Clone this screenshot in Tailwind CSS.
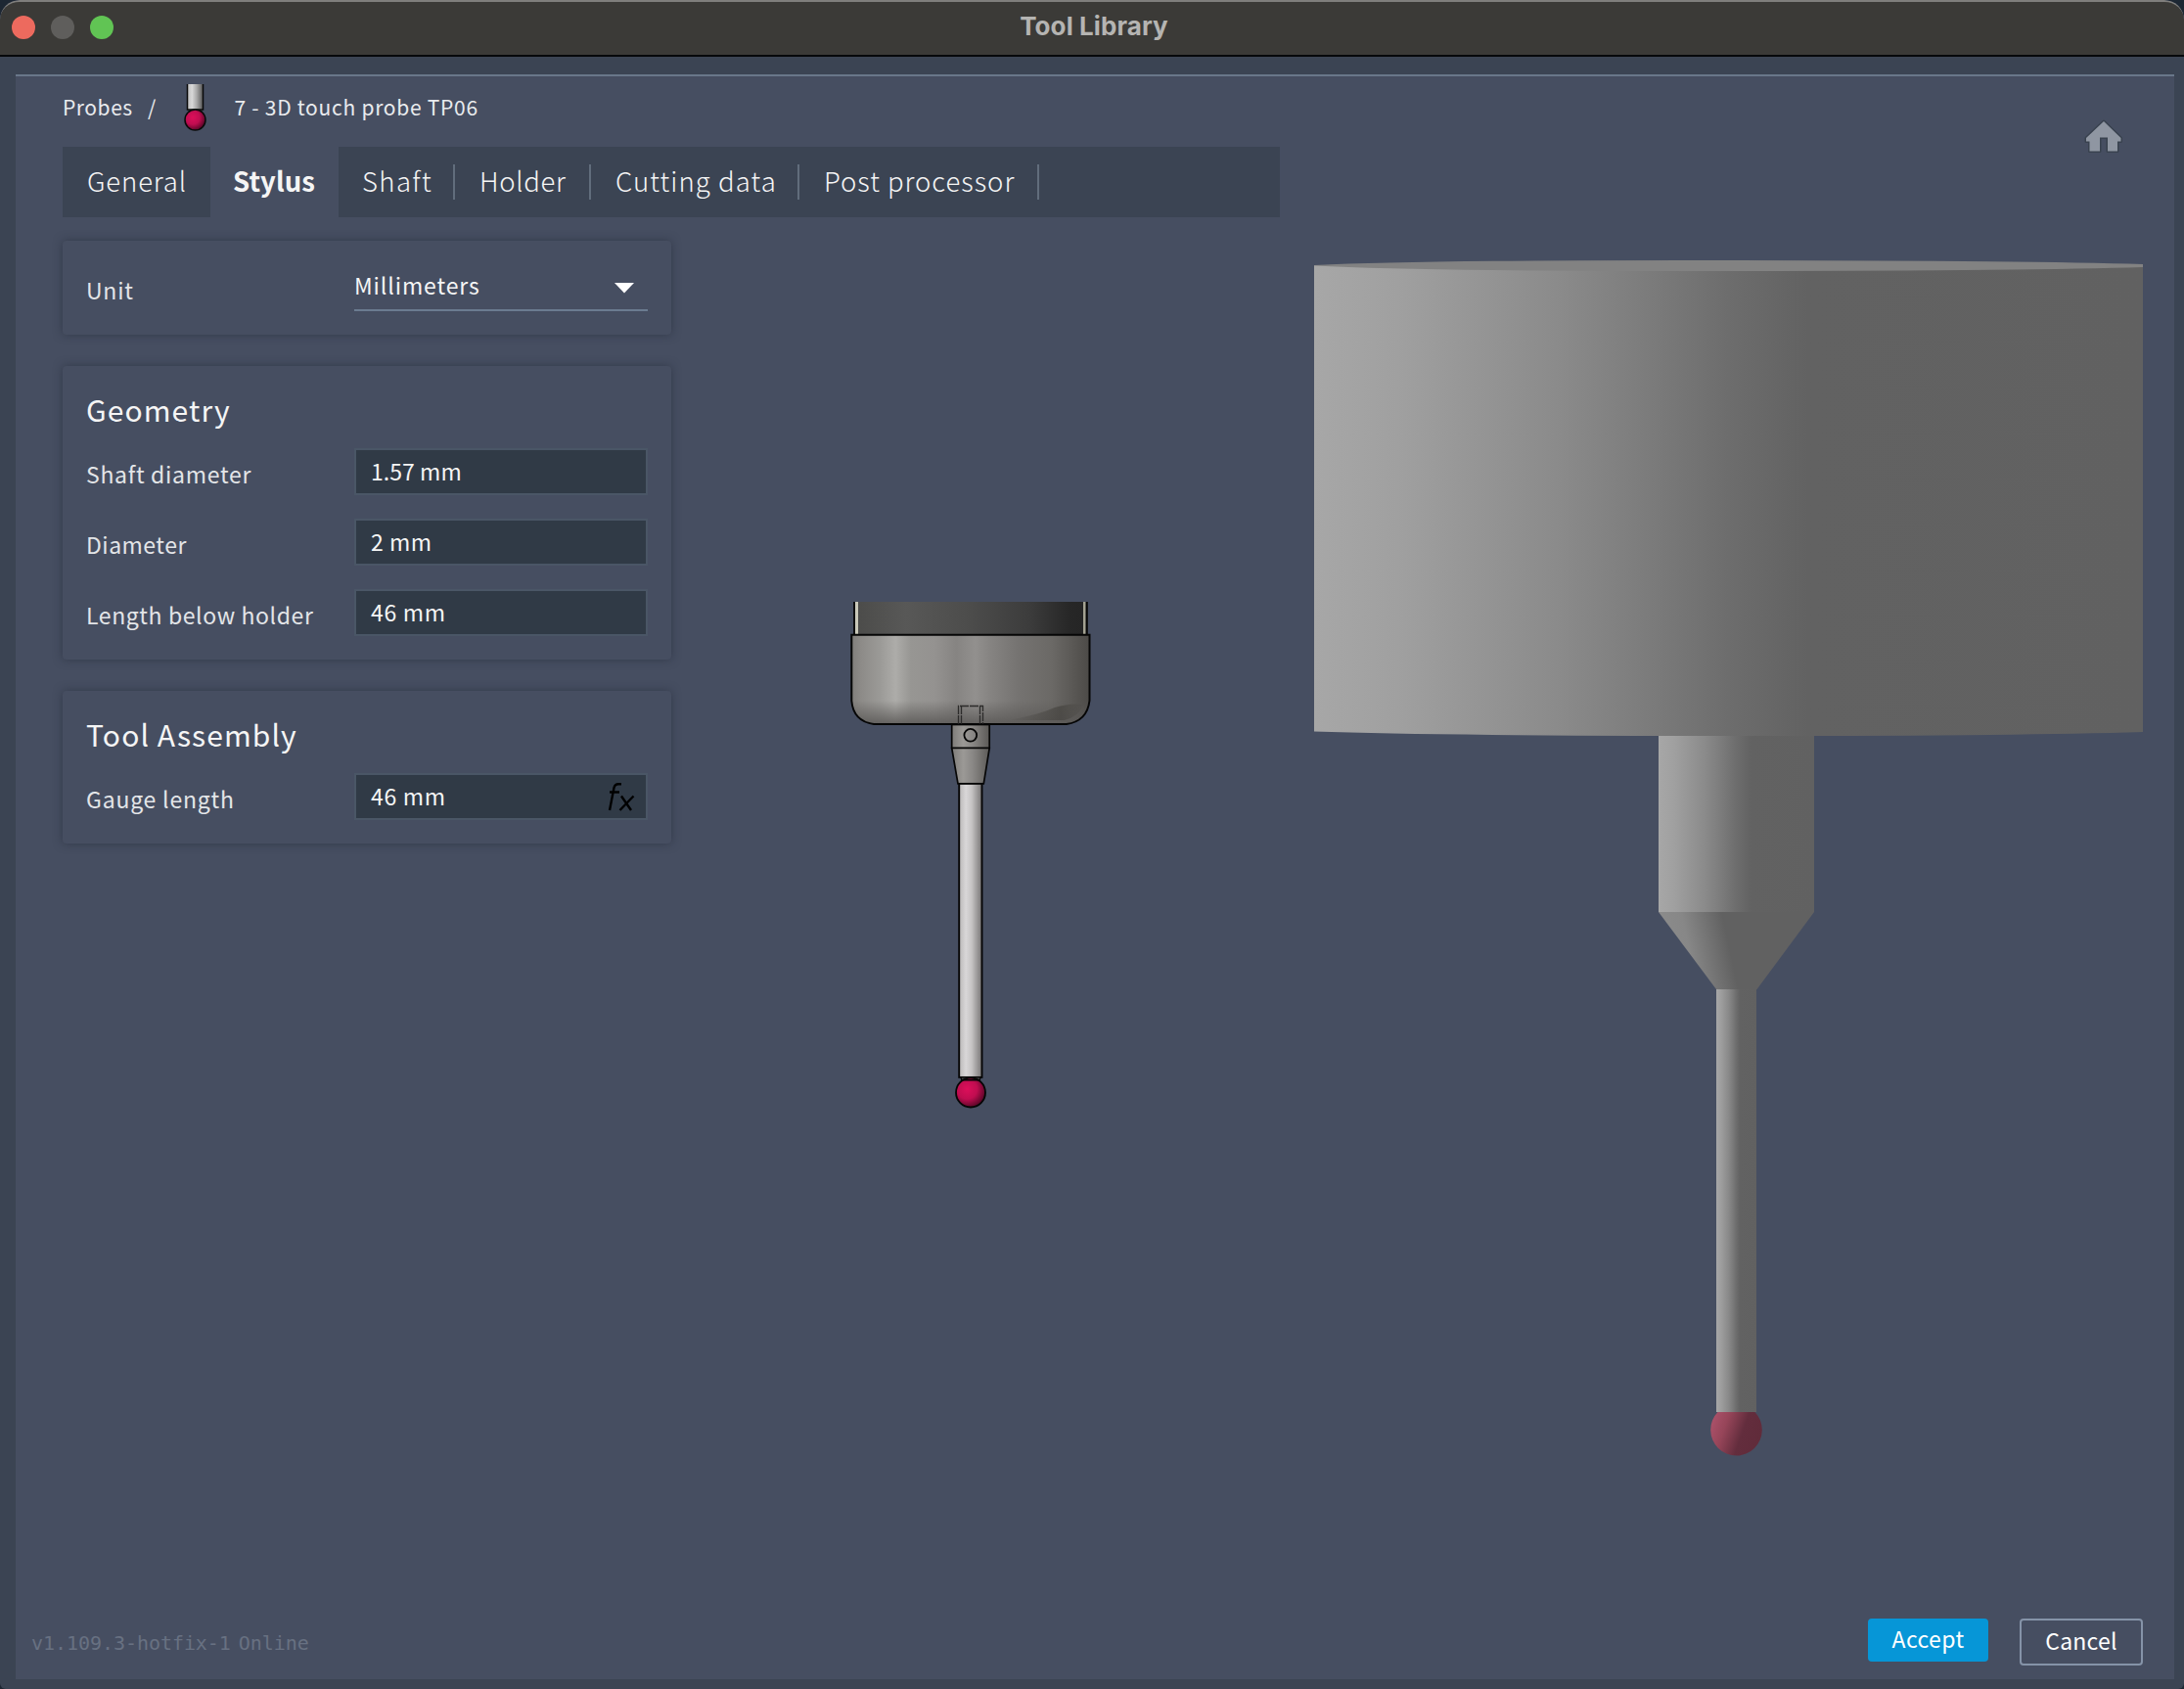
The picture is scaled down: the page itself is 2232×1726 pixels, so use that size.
<!DOCTYPE html>
<html lang="en">
<head>
<meta charset="utf-8">
<title>Tool Library</title>
<script src="https://cdn.jsdelivr.net/npm/@tailwindcss/browser@4"></script>
</head>
<body class="bg-[#1d2733]">
<div class="flex h-[1726px] w-[2232px] flex-col overflow-hidden rounded-tl-[20px] rounded-tr-[20px] rounded-b-[6px] bg-[#3b4453] font-['Noto_Sans_CJK_SC','Noto_Sans',sans-serif] text-[23px] text-[#f5f5f5]">

  <!-- Window title bar -->
  <header class="grid h-[58px] shrink-0 grid-cols-3 items-center rounded-t-[20px] border-t-2 border-b-2 border-t-[#7f7e7c] border-b-[#06080a] bg-[#3b3a37] px-3 pb-0.5">
    <div class="flex gap-4">
      <span class="size-6 rounded-full bg-[#ed6a5e]"></span>
      <span class="size-6 rounded-full bg-[#5f5e5c]"></span>
      <span class="size-6 rounded-full bg-[#61c454]"></span>
    </div>
    <h1 class="pb-[3px] pl-1 text-center font-['Inter',sans-serif] text-[26px] leading-none font-bold tracking-[0.100px] text-[#b5b4b2]">Tool Library</h1>
  </header>

  <main class="mt-[18px] mr-[10px] mb-[10px] ml-4 flex grow flex-col border-t-2 border-[#69778a] bg-[#464e61]">
    <div class="flex h-[1576px]">
      <section class="flex w-[1292px] shrink-0 flex-col pl-12">

        <nav class="mb-3 flex h-[60px] items-center pt-px text-[21px] leading-[30px] text-[#e9ebee]">
          <span class="w-[87px] tracking-[0.56px]">Probes</span>
          <span class="w-[35px]">/</span>
          <svg class="mt-[3px] h-12 w-[27px] shrink-0" viewBox="186 86 27 48">
            <defs>
              <linearGradient id="miniShaft"><stop offset="0" stop-color="#bdbdbd"/><stop offset=".3" stop-color="#d8d8d8"/><stop offset=".6" stop-color="#a8a8a8"/><stop offset="1" stop-color="#555"/></linearGradient>
              <radialGradient id="ruby" cx=".38" cy=".38" r=".68"><stop offset="0" stop-color="#dc0f5a"/><stop offset=".5" stop-color="#c00d50"/><stop offset="1" stop-color="#4c0522"/></radialGradient>
            </defs>
            <rect x="191.500" y="86" width="16" height="26" fill="url(#miniShaft)"/>
            <path d="M191.500 86V112H207.500V86" fill="none" stroke="#0a0a0a" stroke-width="1.500"/>
            <rect x="192.500" y="112" width="14" height="3" fill="#222"/>
            <circle cx="199.500" cy="122.500" r="10.500" fill="url(#ruby)" stroke="#0a0a0a" stroke-width="1.500"/>
          </svg>
          <span class="ml-[26.500px] tracking-[0.73px]">7 - 3D touch probe TP06</span>
        </nav>

        <div class="flex h-[72px] w-[1244px] bg-[#3b4453] text-[27.500px] leading-[68px] font-light whitespace-nowrap">
          <div class="w-[151px] pl-[25px] tracking-[0.850px]">General</div>
          <div class="w-[131px] bg-[#464e61] pl-[23px] font-bold tracking-[0.100px]">Stylus</div>
          <div class="flex w-[119px] items-center justify-between pl-6 tracking-[1.400px]"><span class="h-[72px]">Shaft</span><i class="h-9 w-0.5 bg-[#616d7c]"></i></div>
          <div class="flex w-[139px] items-center justify-between pl-[25px] tracking-[0.700px]"><span class="h-[72px]">Holder</span><i class="h-9 w-0.5 bg-[#616d7c]"></i></div>
          <div class="flex w-[213px] items-center justify-between pl-[25px] tracking-[1.100px]"><span class="h-[72px]">Cutting data</span><i class="h-9 w-0.5 bg-[#616d7c]"></i></div>
          <div class="flex w-[245px] items-center justify-between pl-[25px] tracking-[0.980px]"><span class="h-[72px]">Post processor</span><i class="h-9 w-0.5 bg-[#616d7c]"></i></div>
        </div>

        <div class="mt-6 flex">
          <div class="flex w-[622px] shrink-0 flex-col gap-8">
            <div class="flex h-24 rounded px-6 pt-5 shadow-[0_0_10px_rgba(30,38,52,0.5)]">
              <label class="w-[274px] pt-0.5 leading-[56px] tracking-[0.780px] text-[#e3e5e8]">Unit</label>
              <div class="flex h-[52px] w-[300px] items-center justify-between border-b-2 border-[#6b7b90] pr-[14px]">
                <span class="pt-px tracking-[0.900px]">Millimeters</span>
                <svg class="mt-1.5 h-[11px] w-5" viewBox="0 0 20 11"><path d="M0 0H20L10 10.500Z" fill="#fff"/></svg>
              </div>
            </div>

            <div class="rounded px-6 py-6 shadow-[0_0_10px_rgba(30,38,52,0.5)]">
              <h2 class="mb-5 text-[30px] leading-10 tracking-[1.090px]">Geometry</h2>
              <div class="flex flex-col gap-6">
                <div class="flex h-12"><label class="w-[274px] leading-[52px] tracking-[0.700px] text-[#e3e5e8]">Shaft diameter</label><div class="w-[300px] border-2 border-[#4a5666] bg-[#303a46] pl-[15px] leading-[42px] tracking-[0.050px]">1.57 mm</div></div>
                <div class="flex h-12"><label class="w-[274px] leading-[52px] tracking-[0.490px] text-[#e3e5e8]">Diameter</label><div class="w-[300px] border-2 border-[#4a5666] bg-[#303a46] pl-[15px] leading-[42px] tracking-[0.500px]">2 mm</div></div>
                <div class="flex h-12"><label class="w-[274px] leading-[52px] tracking-[0.600px] text-[#e3e5e8]">Length below holder</label><div class="w-[300px] border-2 border-[#4a5666] bg-[#303a46] pl-[15px] leading-[42px] tracking-[0.720px]">46 mm</div></div>
              </div>
            </div>

            <div class="rounded px-6 py-6 shadow-[0_0_10px_rgba(30,38,52,0.5)]">
              <h2 class="mb-5 text-[30px] leading-10 tracking-[1.100px]">Tool Assembly</h2>
              <div class="flex h-12">
                <label class="w-[274px] leading-[52px] tracking-[0.800px] text-[#e3e5e8]">Gauge length</label>
                <div class="flex w-[300px] justify-between border-2 border-[#4a5666] bg-[#303a46] pr-[11px] pl-[15px] leading-[42px] tracking-[0.720px]">
                  <span>46 mm</span>
                  <svg class="mt-1.5 h-[32px] w-[28px]" viewBox="622 798 28 32" fill="none" stroke="#000" stroke-width="2.400"><path d="M624 828L628.500 805Q629.300 801.300 633 801.300H636M624 809.500H634M636 813.500L646 828M648.500 813.500L634.500 828"/></svg>
                </div>
              </div>
            </div>
          </div>

          <!-- Schematic of the probe -->
          <svg class="h-[940px] w-[622px]" viewBox="686 246 622 940">
            <defs>
              <linearGradient id="collar"><stop offset="0" stop-color="#4b4b49"/><stop offset=".22" stop-color="#585857"/><stop offset=".5" stop-color="#4c4c4b"/><stop offset=".75" stop-color="#3c3c3c"/><stop offset=".92" stop-color="#272727"/><stop offset="1" stop-color="#242424"/></linearGradient>
              <linearGradient id="body"><stop offset="0" stop-color="#807e7b"/><stop offset=".04" stop-color="#8d8b88"/><stop offset=".12" stop-color="#9b9a97"/><stop offset=".185" stop-color="#adaca9"/><stop offset=".25" stop-color="#979693"/><stop offset=".35" stop-color="#949290"/><stop offset=".44" stop-color="#868482"/><stop offset=".52" stop-color="#92908e"/><stop offset=".58" stop-color="#868482"/><stop offset=".7" stop-color="#757371"/><stop offset=".84" stop-color="#6b6966"/><stop offset=".93" stop-color="#5a5855"/><stop offset="1" stop-color="#4c4a47"/></linearGradient>
              <linearGradient id="under" x2="0" y2="1"><stop offset="0" stop-color="#5b5957" stop-opacity="0"/><stop offset="1" stop-color="#5b5957" stop-opacity=".85"/></linearGradient>
              <linearGradient id="shade"><stop offset="0" stop-color="#45433f" stop-opacity="0"/><stop offset=".7" stop-color="#45433f" stop-opacity=".7"/><stop offset="1" stop-color="#45433f" stop-opacity=".1"/></linearGradient>
              <linearGradient id="neck"><stop offset="0" stop-color="#7d7b78"/><stop offset=".3" stop-color="#9b9996"/><stop offset=".55" stop-color="#8a8886"/><stop offset="1" stop-color="#5b5956"/></linearGradient>
              <linearGradient id="stem"><stop offset="0" stop-color="#b9b7b7"/><stop offset=".3" stop-color="#d9d7d8"/><stop offset=".55" stop-color="#c6c4c4"/><stop offset="1" stop-color="#777575"/></linearGradient>
            </defs>
            <rect x="873" y="615" width="238.500" height="33" fill="url(#collar)"/>
            <rect x="874" y="615" width="3" height="33" fill="#c9c8b9"/>
            <rect x="1107" y="615" width="2.500" height="33" fill="#a3a292"/>
            <path d="M873 615V648M1110.800 615V648" stroke="#080808" stroke-width="1.800"/>
            <path d="M870.300 648.700H1113.500V716Q1111 737 1090 740H893Q872 737 870.300 716Z" fill="url(#body)"/>
            <path d="M871 716H1112.500Q1110 737 1090 739H893Q873 737 871 716Z" fill="url(#under)"/>
            <path d="M1030 736Q1060 731 1078 723Q1094 718 1107 720Q1103 732 1088 736Z" fill="url(#shade)"/>
            <path d="M870.300 648.700H1113.500V716Q1111 737 1090 740H893Q872 737 870.300 716Z" fill="none" stroke="#060606" stroke-width="2"/>
            <path d="M979.500 740V721.500H1004.500V740M982.500 740V722M1001.500 740V722" fill="none" stroke="#2c2b2a" stroke-width="1.300" stroke-dasharray="9 1"/>
            <rect x="972.700" y="740.500" width="38.500" height="24" fill="url(#neck)" stroke="#060606" stroke-width="1.700"/>
            <circle cx="991.800" cy="751.300" r="6.400" fill="none" stroke="#060606" stroke-width="1.800"/>
            <path d="M972.700 764.500H1011.200L1005.300 800.900H979Z" fill="url(#neck)" stroke="#060606" stroke-width="1.700"/>
            <rect x="980.200" y="800.900" width="23.300" height="300" fill="url(#stem)" stroke="#060606" stroke-width="1.900"/>
            <path d="M982 1101H1002L1001 1105H983Z" fill="#4b4b4b" stroke="#060606" stroke-width="1.200"/>
            <circle cx="992" cy="1116.500" r="15" fill="url(#ruby)" stroke="#060606" stroke-width="1.800"/>
            <path d="M984 1103.800H1000" stroke="#060606" stroke-width="1.500"/>
          </svg>
        </div>
      </section>

      <!-- 3D viewport -->
      <svg class="h-[1500px] w-[914px] shrink-0" viewBox="1308 78 914 1500">
        <defs>
          <linearGradient id="cyl"><stop offset="0" stop-color="#a7a7a7"/><stop offset=".1" stop-color="#a0a0a0"/><stop offset=".2" stop-color="#959595"/><stop offset=".3" stop-color="#8a8a8a"/><stop offset=".4" stop-color="#7c7c7c"/><stop offset=".5" stop-color="#6d6d6d"/><stop offset=".595" stop-color="#626262"/><stop offset="1" stop-color="#616161"/></linearGradient>
          <linearGradient id="cone" gradientUnits="userSpaceOnUse" x1="1705" y1="975" x2="1766" y2="962"><stop offset="0" stop-color="#8b8b8b"/><stop offset=".35" stop-color="#878787"/><stop offset=".75" stop-color="#707070"/><stop offset="1" stop-color="#616161"/></linearGradient>
          <linearGradient id="tip" x1="0" y1=".35" x2="1" y2=".65"><stop offset="0" stop-color="#a95068"/><stop offset=".25" stop-color="#964559"/><stop offset=".6" stop-color="#632d3d"/><stop offset="1" stop-color="#602b3a"/></linearGradient>
        </defs>
        <path d="M2150 124L2167.500 141V144.500H2164V154.500H2154V140.500H2146V154.500H2135.500V144.500H2132V141Z" fill="#8f96a2" stroke="#39424f" stroke-width="3" stroke-linejoin="round" paint-order="stroke"/>
        <path d="M1343 271Q1450 266 1720 266Q2060 266 2190 270V300H1343Z" fill="#828282"/>
        <path d="M1343 271.500Q1450 277 1720 277Q2060 277 2190 273V748Q2060 752 1790 752Q1480 752 1343 747.500Z" fill="url(#cyl)"/>
        <rect x="1695" y="752" width="159" height="180" fill="url(#cyl)"/>
        <path d="M1695 932H1854L1795.500 1011H1754Z" fill="url(#cone)"/>
        <path d="M1755.500 1443H1793.500A26.300 26.300 0 1 1 1755.500 1443Z" fill="url(#tip)"/>
        <rect x="1754" y="1011" width="41" height="432" fill="url(#cyl)"/>
      </svg>
    </div>

    <footer class="flex items-start justify-between pr-8 pl-4">
      <p class="flex gap-2 font-['DejaVu_Sans_Mono',monospace] text-[20px] leading-[50px] tracking-[-0.050px] text-[#687182]"><span>v1.109.3-hotfix-1</span><span>Online</span></p>
      <div class="flex items-start gap-8 text-center text-white">
        <button class="h-11 w-[123px] rounded bg-[#0696d7] pb-1 leading-10 tracking-[0.400px]">Accept</button>
        <button class="h-12 w-[126px] rounded border-2 border-[#8593a8] pb-1 leading-10 tracking-[0.230px]">Cancel</button>
      </div>
    </footer>
  </main>
</div>
</body>
</html>
